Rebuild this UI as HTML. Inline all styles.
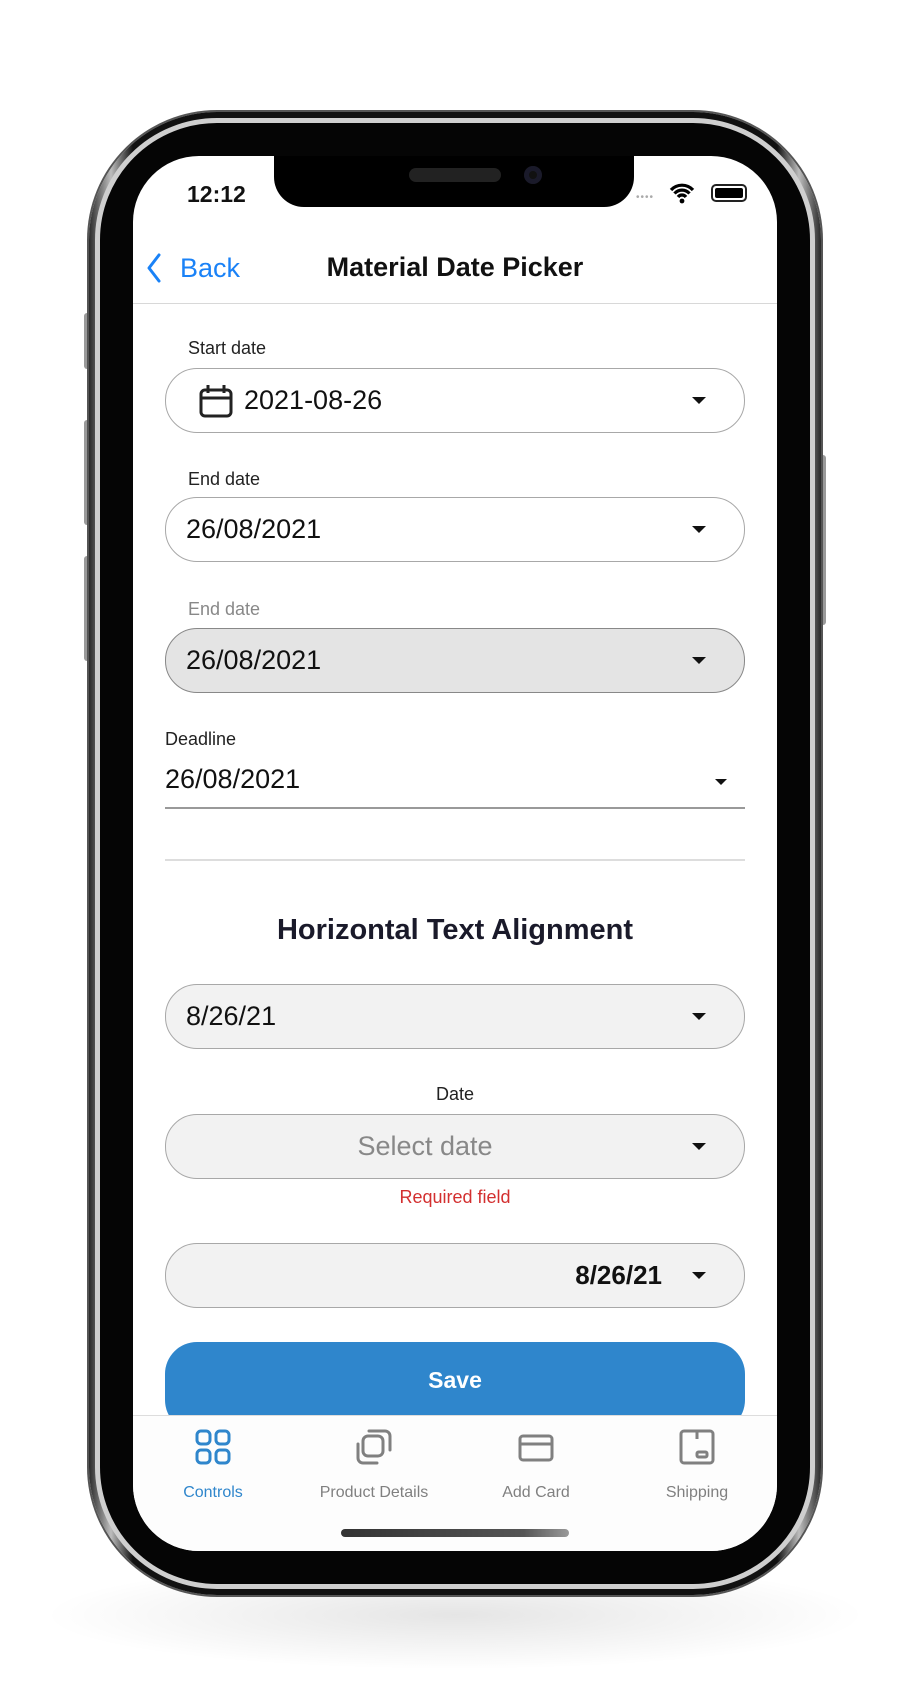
<!DOCTYPE html>
<html><head><meta charset="utf-8"><style>
*{margin:0;padding:0;box-sizing:border-box}
body{width:910px;height:1708px;background:#fff;position:relative;overflow:hidden;font-family:"Liberation Sans",sans-serif;color:#111}
.a{position:absolute}
.shadow{left:40px;top:1560px;width:830px;height:110px;border-radius:50%;background:radial-gradient(ellipse at center,rgba(0,0,0,.10),rgba(0,0,0,0) 70%)}
.outer{left:89px;top:112px;width:732px;height:1483px;border-radius:128px;background:linear-gradient(90deg,#2a2a2a,#bdbdbd 3%,#111 6%,#111 94%,#bdbdbd 97%,#2a2a2a);box-shadow:0 0 0 2px #555}
.rim{left:95px;top:118px;width:720px;height:1471px;border-radius:122px;border:5px solid #cfcfcf;background:#050505}
.screen{left:133px;top:156px;width:644px;height:1395px;border-radius:66px;background:#fff;overflow:hidden}
.btn{background:#9a9a9a;border-radius:3px;width:6px}
.lbl{font-size:18px;color:#222}
.field{position:absolute;left:32px;width:580px;height:65px;border:1.5px solid #a8a8a8;border-radius:32px;font-size:27px;display:flex;align-items:center;padding-left:20px}
.tri{position:absolute;right:38px;top:28px;width:0;height:0;border-left:7px solid transparent;border-right:7px solid transparent;border-top:7px solid #111}
.tab{position:absolute;top:1328px;width:160px;text-align:center;font-size:16px;color:#808080}
</style></head><body>
<div class="a shadow"></div>
<div class="a btn" style="left:84px;top:313px;height:56px"></div>
<div class="a btn" style="left:84px;top:420px;height:105px"></div>
<div class="a btn" style="left:84px;top:556px;height:105px"></div>
<div class="a btn" style="left:820px;top:455px;height:170px"></div>
<div class="a outer"></div>
<div class="a rim"></div>
<div class="a screen">
  <div class="a" style="left:141px;top:-2px;width:360px;height:53px;background:#000;border-radius:0 0 30px 30px"></div>
  <div class="a" style="left:276px;top:12px;width:92px;height:14px;border-radius:7px;background:#222"></div>
  <div class="a" style="left:391px;top:10px;width:18px;height:18px;border-radius:50%;background:#111;box-shadow:inset 0 0 0 5px #1a1a2a"></div>
  <div class="a" style="left:54px;top:25px;font-size:23px;font-weight:bold">12:12</div>
  <div class="a" style="left:503px;top:36px;font-size:10px;color:#aaa;letter-spacing:1px">••••</div>
  <svg class="a" style="left:536px;top:26px" width="26" height="22" viewBox="0 0 26 22"><path d="M2 8a15 15 0 0 1 22 0M5.5 11.5a10 10 0 0 1 15 0M9 15a5 5 0 0 1 8 0" stroke="#000" stroke-width="3.2" fill="none"/><circle cx="13" cy="19" r="2.4" fill="#000"/></svg>
  <div class="a" style="left:578px;top:28px;width:36px;height:18px;border:2px solid #222;border-radius:5px;padding:2px"><div style="width:100%;height:100%;background:#000;border-radius:2px"></div></div>
  <svg class="a" style="left:13px;top:97px" width="16" height="30" viewBox="0 0 16 30"><path d="M13 2L3 15l10 13" stroke="#1a82f7" stroke-width="3" fill="none" stroke-linecap="round" stroke-linejoin="round"/></svg>
  <div class="a" style="left:47px;top:97px;font-size:27px;color:#1a82f7">Back</div>
  <div class="a" style="left:0;width:644px;top:96px;text-align:center;font-size:27px;font-weight:bold">Material Date Picker</div>
  <div class="a" style="left:0;top:147px;width:644px;height:1px;background:#d8d8d8"></div>
  <div class="a lbl" style="left:55px;top:182px">Start date</div>
  <div class="field" style="top:212px"><svg width="36" height="34" viewBox="0 0 36 34" style="margin:0 10px 0 12px"><rect x="3" y="6" width="30" height="26" rx="4" stroke="#222" stroke-width="3" fill="none"/><path d="M3 14h30M10 1v8M26 1v8" stroke="#222" stroke-width="3"/></svg>2021-08-26<div class="tri"></div></div>
  <div class="a lbl" style="left:55px;top:313px">End date</div>
  <div class="field" style="top:341px">26/08/2021<div class="tri"></div></div>
  <div class="a lbl" style="left:55px;top:443px;color:#888">End date</div>
  <div class="field" style="top:472px;background:#e4e4e4;border-color:#888">26/08/2021<div class="tri"></div></div>
  <div class="a lbl" style="left:32px;top:573px">Deadline</div>
  <div class="a" style="left:32px;top:608px;font-size:27px">26/08/2021</div>
  <div class="a" style="left:582px;top:623px;border-left:6px solid transparent;border-right:6px solid transparent;border-top:6px solid #111"></div>
  <div class="a" style="left:32px;top:651px;width:580px;height:1.5px;background:#999"></div>
  <div class="a" style="left:32px;top:703px;width:580px;height:1.5px;background:#ddd"></div>
  <div class="a" style="left:0;width:644px;top:758px;text-align:center;font-size:29px;font-weight:bold;color:#1a1a2a">Horizontal Text Alignment</div>
  <div class="field" style="top:828px;background:#f2f2f2">8/26/21<div class="tri"></div></div>
  <div class="a lbl" style="left:0;width:644px;text-align:center;top:928px">Date</div>
  <div class="field" style="top:958px;background:#f2f2f2;justify-content:center;padding:0 60px 0 0;color:#888">Select date<div class="tri"></div></div>
  <div class="a" style="left:0;width:644px;text-align:center;top:1031px;font-size:18px;color:#d32f2f">Required field</div>
  <div class="field" style="top:1087px;background:#f2f2f2;justify-content:flex-end;padding-right:82px;font-weight:bold;font-size:26px">8/26/21<div class="tri"></div></div>
  <div class="a" style="left:32px;top:1186px;width:580px;height:90px;border-radius:32px;background:#2f86cc;color:#fff;font-weight:bold;font-size:23px;text-align:center;padding-top:25px">Save</div>
  <div class="a" style="left:0;top:1259px;width:644px;height:140px;background:#fdfdfd;border-top:1px solid #ddd"></div>
  <svg class="a" style="left:62px;top:1273px" width="36" height="36" viewBox="0 0 36 36" fill="none" stroke="#2f86cc" stroke-width="3"><rect x="2" y="2" width="13" height="13" rx="4"/><rect x="21" y="2" width="13" height="13" rx="4"/><rect x="2" y="21" width="13" height="13" rx="4"/><rect x="21" y="21" width="13" height="13" rx="4"/></svg>
  <svg class="a" style="left:223px;top:1273px" width="36" height="36" viewBox="0 0 36 36" fill="none" stroke="#808080" stroke-width="3"><rect x="7" y="7" width="20" height="20" rx="5"/><path d="M13 2h16a5 5 0 0 1 5 5v14M2 15v14a5 5 0 0 0 5 5h14" stroke-linecap="round"/></svg>
  <svg class="a" style="left:385px;top:1276px" width="36" height="32" viewBox="0 0 36 32" fill="none" stroke="#808080" stroke-width="3"><rect x="2" y="4" width="32" height="24" rx="3"/><path d="M2 12h32"/></svg>
  <svg class="a" style="left:546px;top:1273px" width="36" height="36" viewBox="0 0 36 36" fill="none" stroke="#808080" stroke-width="3"><rect x="2" y="2" width="32" height="32" rx="3"/><path d="M18 2v8"/><rect x="18" y="23" width="10" height="5" rx="1.5"/></svg>
  <div class="tab" style="left:0;color:#2f86cc">Controls</div>
  <div class="tab" style="left:161px">Product Details</div>
  <div class="tab" style="left:323px">Add Card</div>
  <div class="tab" style="left:484px">Shipping</div>
  <div class="a" style="left:208px;top:1373px;width:228px;height:8px;border-radius:4px;background:linear-gradient(90deg,#333,#555 80%,#999)"></div>
</div>
</body></html>
